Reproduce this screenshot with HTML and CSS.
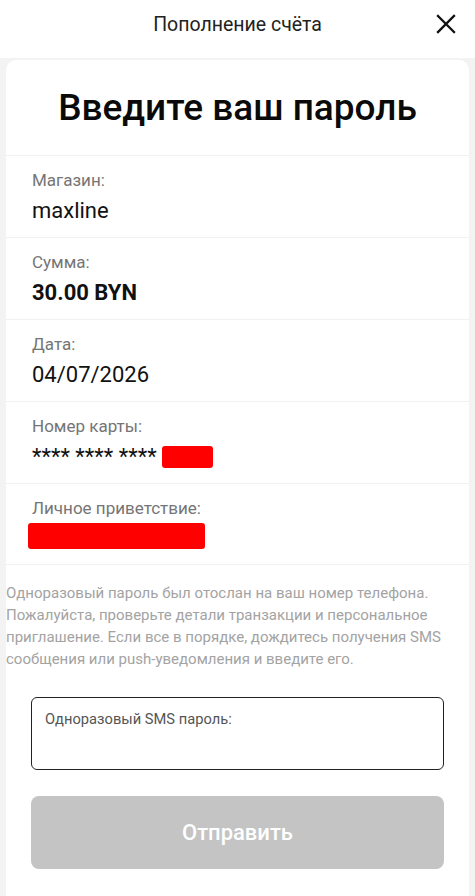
FILE: index.html
```html
<!DOCTYPE html>
<html lang="ru">
<head>
<meta charset="utf-8">
<title>Пополнение счёта</title>
<link rel="stylesheet" href="styles.css">
</head>
<body>
<header class="topbar">
  <div class="topbar-title">Пополнение счёта</div>
  <button class="close" aria-label="Закрыть">
    <svg width="20" height="20" viewBox="0 0 20 20"><path d="M2 2 L18 18 M18 2 L2 18" stroke="#111" stroke-width="2.3" stroke-linecap="square" fill="none"/></svg>
  </button>
</header>
<main class="page">
  <section class="card">
    <h1 class="card-title">Введите ваш пароль</h1>
    <div class="row">
      <div class="label">Магазин:</div>
      <div class="value">maxline</div>
    </div>
    <div class="row">
      <div class="label">Сумма:</div>
      <div class="value bold">30.00 BYN</div>
    </div>
    <div class="row">
      <div class="label">Дата:</div>
      <div class="value">04/07/2026</div>
    </div>
    <div class="row">
      <div class="label">Номер карты:</div>
      <div class="value card-num">**** **** **** <span class="redact redact-small"></span></div>
    </div>
    <div class="row row-last">
      <div class="label">Личное приветствие:</div>
      <div class="redact redact-wide"></div>
    </div>
    <p class="note">Одноразовый пароль был отослан на ваш номер телефона. Пожалуйста, проверьте детали транзакции и персональное приглашение. Если все в порядке, дождитесь получения SMS сообщения или push-уведомления и введите его.</p>
    <div class="field">
      <label class="field-label">Одноразовый SMS пароль:</label>
    </div>
    <button class="submit">Отправить</button>
  </section>
</main>
</body>
</html>
```

FILE: styles.css
```css
* { box-sizing: border-box; }
html, body { margin: 0; padding: 0; }
body {
  font-family: Roboto, "Noto Sans", Arial, sans-serif;
  background: #f3f3f3;
  width: 475px;
  height: 896px;
  overflow: hidden;
  color: #111;
}
.topbar {
  height: 58px;
  background: #fff;
  display: flex;
  align-items: center;
  justify-content: center;
  position: relative;
}
.topbar-title {
  font-size: 19.5px;
  color: #222;
  margin-top: -10px;
}
.close {
  position: absolute;
  right: 19px;
  top: 14px;
  border: 0;
  background: none;
  padding: 0;
  width: 20px;
  height: 20px;
}
.close svg { display: block; }
.page {
  padding: 2px 6px 0 6px;
}
.card {
  background: #fff;
  border-radius: 10px 10px 0 0;
  padding-bottom: 40px;
}
.card-title {
  margin: 0;
  padding: 27px 0 26px;
  font-size: 37px;
  line-height: 42px;
  font-weight: 500;
  text-align: center;
  color: #0a0a0a;
  border-bottom: 1px solid #f1f1f1;
}
.row {
  padding: 12px 26px 11px;
  border-bottom: 1px solid #f1f1f1;
}
.label {
  font-size: 17px;
  line-height: 24px;
  color: #757575;
}
.value {
  margin-top: 4px;
  font-size: 22px;
  line-height: 30px;
  color: #111;
  display: flex;
  align-items: center;
}
.value.bold { font-weight: 700; }
.card-num { white-space: pre; }
.redact {
  background: #ff0000;
  border-radius: 3px;
}
.redact-small {
  display: inline-block;
  width: 51px;
  height: 22px;
  margin-left: 0;
  margin-top: -1px;
}
.redact-wide {
  width: 177px;
  height: 26px;
  margin-top: 3px;
  margin-left: -4px;
}
.row-last { padding-bottom: 15px; }
.note {
  margin: 17px 0 0;
  padding: 0 6px 0 0;
  font-size: 15px;
  line-height: 22px;
  color: #a3a3a3;
}
.field {
  margin: 27px 25px 0;
  height: 73px;
  border: 1px solid #222;
  border-radius: 6px;
  padding: 12px 13px;
}
.field-label {
  display: block;
  font-size: 14.7px;
  line-height: 18px;
  color: #555;
}
.submit {
  display: block;
  margin: 26px 25px 0;
  width: calc(100% - 50px);
  height: 73px;
  border: 0;
  border-radius: 8px;
  background: #c4c4c4;
  color: #fff;
  font-family: Roboto, "Noto Sans", Arial, sans-serif;
  font-size: 22px;
  font-weight: 500;
}
```
